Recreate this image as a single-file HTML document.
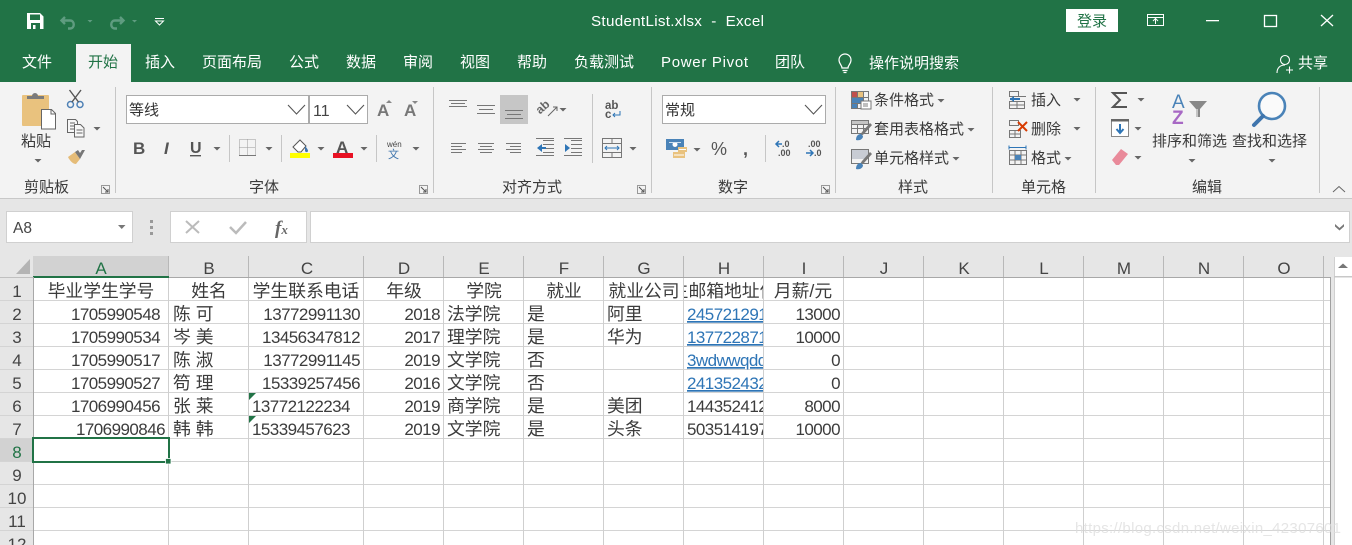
<!DOCTYPE html>
<html lang="zh-CN"><head><meta charset="utf-8"><title>StudentList.xlsx - Excel</title>
<style>
html,body{margin:0;padding:0;width:1352px;height:545px;overflow:hidden;background:#fff}
svg{display:block}
text{font-family:"Liberation Sans","Noto Sans CJK SC",sans-serif;white-space:pre}
.tab{font-size:15px;fill:#fff}
.rb{font-size:15px;fill:#3a3a3a}
.hd{font-size:17px;fill:#444;text-anchor:middle}
.rn{font-size:17px;fill:#444;text-anchor:middle}
.n{font-size:17px;letter-spacing:-.55px;fill:#3c3c3c;text-anchor:end}
.nl{font-size:17px;letter-spacing:-.55px;fill:#3c3c3c}
.c{font-size:17.8px;fill:#3c3c3c;transform:translateY(1px)}
.cc{font-size:17.8px;fill:#3c3c3c;text-anchor:middle;transform:translateY(1px)}
.lk{font-size:17px;letter-spacing:-.55px;fill:#2e75b6;text-decoration:underline}
</style></head><body>
<svg xmlns="http://www.w3.org/2000/svg" width="1352" height="545" viewBox="0 0 1352 545">
<defs>
<symbol id="tri" overflow="visible"><path d="M-3.5 0h7L0 3.5z" fill="#666"/></symbol>
<symbol id="dlg" overflow="visible"><path d="M.5.5h8v8h-8z" fill="none" stroke="#999"/><path d="M2 2l5 5M7 4v3H4" fill="none" stroke="#555"/></symbol>
</defs>
<!-- backgrounds -->
<rect width="1352" height="82" fill="#217346"/>
<rect y="82" width="1352" height="116" fill="#f3f3f3"/>
<rect y="198" width="1352" height="1" fill="#c8c8c8"/>
<rect y="199" width="1352" height="78" fill="#e6e6e6"/>
<rect x="76" y="44" width="55" height="38" fill="#f3f3f3"/>

<!-- QAT -->
<path d="M27 13h13l3.500 3.500V29H27z" fill="#fff"/>
<rect x="30" y="14.500" width="10" height="5.500" fill="#217346"/>
<rect x="31" y="23" width="9" height="6" fill="#217346"/><rect x="33" y="25" width="2.500" height="4" fill="#fff"/>
<path d="M65 17l-3.500 3.500L65 24M62 20.500h8c5 0 5 8 0 8h-2" fill="none" stroke="#5f9c80" stroke-width="2.400"/>
<path d="M87.500 20h5l-2.500 2.500z" fill="#5f9c80"/>
<path d="M120 17l3.500 3.500L120 24M123 20.500h-8c-5 0-5 8 0 8h2" fill="none" stroke="#5f9c80" stroke-width="2.400"/>
<path d="M132 20h5l-2.500 2.500z" fill="#5f9c80"/>
<path d="M155 18.500h9M155.500 21l4 4 4-4z" fill="none" stroke="#fff"/>

<!-- Title -->
<text x="591" y="26" font-size="15.200" letter-spacing=".3" fill="#fff">StudentList.xlsx  -  Excel</text>
<rect x="1066" y="9" width="52" height="23" fill="#fff"/>
<text x="1092" y="26" font-size="15" fill="#217346" text-anchor="middle">登录</text>
<path d="M1147.500 14.500h16v11h-16zM1148 17.500h15" fill="none" stroke="#fff"/><path d="M1155.500 24v-5M1153 21l2.500-2.500 2.500 2.500" fill="none" stroke="#fff"/>
<rect x="1206" y="20" width="13" height="1.300" fill="#fff"/>
<rect x="1264.500" y="15.500" width="12" height="11" fill="none" stroke="#fff" stroke-width="1.300"/>
<path d="M1321 15l12 11M1333 15l-12 11" stroke="#fff" stroke-width="1.300"/>

<!-- Tabs -->
<text class="tab" x="22" y="67">文件</text>
<text class="tab" x="88" y="67" style="fill:#217346">开始</text>
<text class="tab" x="145" y="67">插入</text>
<text class="tab" x="202" y="67">页面布局</text>
<text class="tab" x="289" y="67">公式</text>
<text class="tab" x="346" y="67">数据</text>
<text class="tab" x="403" y="67">审阅</text>
<text class="tab" x="460" y="67">视图</text>
<text class="tab" x="517" y="67">帮助</text>
<text class="tab" x="574" y="67">负载测试</text>
<text class="tab" x="661" y="67" letter-spacing=".7">Power Pivot</text>
<text class="tab" x="775" y="67">团队</text>
<path d="M842 69c0-3-3-4-3-8a6 6 0 0 1 12 0c0 4-3 5-3 8zM842.500 71.500h5M843.500 73.500h3" transform="translate(0 -1)" fill="none" stroke="#fff" stroke-width="1.200"/>
<text class="tab" x="869" y="68">操作说明搜索</text>
<circle cx="1285" cy="60" r="4.500" fill="none" stroke="#fff" stroke-width="1.100"/>
<path d="M1277 73c0-5 3-8 8-8M1286 70h7M1289.500 66.500v7" fill="none" stroke="#fff" stroke-width="1.100"/>
<text class="tab" x="1298" y="68">共享</text>

<!-- ribbon separators -->
<g fill="#c6c6c6">
<rect x="115" y="87" width="1" height="106"/><rect x="433" y="87" width="1" height="106"/>
<rect x="651" y="87" width="1" height="106"/><rect x="835" y="87" width="1" height="106"/>
<rect x="992" y="87" width="1" height="106"/><rect x="1095" y="87" width="1" height="106"/>
<rect x="1319" y="87" width="1" height="106"/>
<rect x="229" y="135" width="1" height="27"/><rect x="281" y="135" width="1" height="27"/><rect x="376" y="135" width="1" height="27"/>
<rect x="592" y="94" width="1" height="69"/><rect x="765" y="135" width="1" height="27"/>
</g>

<!-- Clipboard -->
<rect x="22" y="95" width="27" height="31" rx="1" fill="#e9c27e"/>
<path d="M27 99v-3h5a3 3 0 0 1 6 0h6v3z" fill="#7b7b7b"/>
<path d="M41.500 109.500h10l4 4v15.500h-14z" fill="#fff" stroke="#666"/><path d="M51 110v4h4" fill="none" stroke="#666"/>
<text class="rb" x="21" y="146">粘贴</text>
<use href="#tri" x="38" y="159"/>
<g fill="none"><circle cx="70.500" cy="104.500" r="3" stroke="#4f81b5" stroke-width="1.500"/><circle cx="80" cy="104.500" r="3" stroke="#4f81b5" stroke-width="1.500"/><path d="M72 102l9-12M78.500 102l-9-12" stroke="#555" stroke-width="1.400"/></g>
<path d="M67.500 119.500h8l2 2v3h-3v8h-7zM74.500 124.500h6l3.500 3.500v9h-9.500zM70 123h5M70 126h4M70 129h4M76.500 130h6M76.500 133h6" fill="#f7f7f7" stroke="#666"/>
<use href="#tri" x="97" y="127"/>
<path d="M68 157l7-5 5 7-4 5c-3 0-6-3-8-7z" fill="#e5bc78"/><path d="M75 152l3-2 2 3 2-3 3 0-5 9z" fill="#777"/>

<!-- Font -->
<rect x="126.500" y="95.500" width="182" height="28" fill="#fff" stroke="#ababab"/>
<rect x="309.500" y="95.500" width="58" height="28" fill="#fff" stroke="#ababab"/>
<text x="129" y="115" font-size="15" fill="#333">等线</text>
<text x="313" y="116" font-size="16" fill="#444">11</text>
<path d="M288 105l8.500 9 8.500-9M347 105l8.500 9 8.500-9" fill="none" stroke="#555" stroke-width="1.100"/>
<text x="377" y="116" font-size="17" font-weight="bold" fill="#777">A</text><path d="M386 103h6l-3-3z" fill="#888"/>
<text x="404" y="116" font-size="17" font-weight="bold" fill="#777">A</text><path d="M412 101h6l-3 3z" fill="#888"/>
<text x="133" y="154" font-size="17" font-weight="bold" fill="#555">B</text>
<text x="164" y="154" font-size="17" font-weight="bold" font-style="italic" fill="#555">I</text>
<text x="190" y="153" font-size="16" font-weight="bold" fill="#555">U</text><rect x="190" y="155" width="11" height="1.400" fill="#555"/>
<use href="#tri" x="217" y="147"/>
<path d="M239.500 139.500h16v16h-16zM247.500 139.500v16M239.500 147.500h16" fill="none" stroke="#999" stroke-dasharray="1 1"/><path d="M239 155.500h17" stroke="#777"/>
<use href="#tri" x="269" y="147"/>
<path d="M293 147l7-7 6 6-5 6h-3z" fill="#fff" stroke="#555"/><path d="M305 146c2 2 3 4 3 5s-2 2-3 0z" fill="#3f75ad"/>
<rect x="290" y="153" width="20" height="5" fill="#ffff00"/>
<use href="#tri" x="321" y="147"/>
<text x="336" y="153" font-size="17" fill="#555" font-weight="bold">A</text>
<rect x="333" y="153" width="20" height="5" fill="#e81123"/>
<use href="#tri" x="364" y="147"/>
<text x="387" y="147" font-size="8" fill="#444">wén</text>
<text x="388" y="158" font-size="11" fill="#3f75ad">文</text>
<use href="#tri" x="416" y="147"/>
<text x="24" y="192" class="rb">剪贴板</text>
<text x="249" y="192" class="rb">字体</text>
<use href="#dlg" x="101" y="185"/><use href="#dlg" x="419" y="185"/>

<!-- Alignment -->
<rect x="500" y="95" width="28" height="29" fill="#c6c6c6"/>
<g stroke="#777" stroke-width="1" fill="none">
<path d="M449 100.500h18M451 103.500h14M449 106.500h18"/>
<path d="M477 105.500h18M479 109.500h14M477 113.500h18"/>
<path d="M505 110.500h18M507 114.500h14M505 118.500h18"/>
<path d="M451 143.500h15M451 146.500h11M451 149.500h15M451 152.500h11"/>
<path d="M478 143.500h16M480 146.500h12M478 149.500h16M480 152.500h12"/>
<path d="M506 143.500h15M510 146.500h11M506 149.500h15M510 152.500h11"/>
<path d="M543 140.500h11M543 144.500h11M543 148.500h11M543 152.500h11M536 155.500h18"/>
<path d="M571 140.500h11M571 144.500h11M571 148.500h11M571 152.500h11M564 155.500h18M564 138.500h18"/>
<path d="M536 138.500h18"/>
<path d="M602.500 138.500h19v19h-19zM602.500 143.500h19M602.500 152.500h19M612 138.500v5M612 152.500v5"/>
</g>
<path d="M537 148l5-4v8zM542 147h4v2h-4z" fill="#2e75b6"/><path d="M570 148l-5-4v8z" fill="#2e75b6"/>
<path d="M605 148h14M607 146l-2 2 2 2M617 146l2 2-2 2" fill="none" stroke="#2e75b6"/>
<text x="536" y="110" font-size="12" fill="#666" transform="rotate(-42 544 107)" font-weight="bold">ab</text><path d="M548 116l9-9M553 107h4v4" stroke="#666" fill="none"/>
<use href="#tri" x="563" y="108"/>
<text x="605" y="109" font-size="11.500" fill="#555" font-weight="bold">ab</text>
<text x="605" y="118" font-size="11.500" fill="#555" font-weight="bold">c</text><path d="M620 111v4h-7M615 113l-2 2 2 2" fill="none" stroke="#2e75b6"/>
<use href="#tri" x="633" y="147"/>
<text x="502" y="192" class="rb">对齐方式</text>
<use href="#dlg" x="637" y="185"/>

<!-- Number -->
<rect x="662.500" y="95.500" width="163" height="28" fill="#fff" stroke="#ababab"/>
<text x="665" y="115" font-size="15" fill="#333">常规</text>
<path d="M805 105l8.500 9 8.500-9" fill="none" stroke="#555" stroke-width="1.100"/>
<rect x="666" y="139" width="18" height="11" fill="#4a83b8"/><circle cx="675" cy="144.500" r="2.500" fill="#fff"/><rect x="669" y="142" width="12" height="1" fill="#cfe0f0"/>
<path d="M673 152h12v6h-12z" fill="#e9c27e"/><path d="M678 147h9v5h-9z" fill="#e9c27e"/><path d="M674 155h10M679 149.500h7" stroke="#fff"/>
<use href="#tri" x="697" y="148"/>
<text x="711" y="155" font-size="18" fill="#555">%</text>
<text x="743" y="155" font-size="18" font-weight="bold" fill="#555">,</text>
<text x="782" y="147" font-size="9" fill="#555" font-weight="bold">.0</text><text x="778" y="156" font-size="9" fill="#555" font-weight="bold">.00</text>
<path d="M776 144h6M779 141l-3 3 3 3" stroke="#2e75b6" stroke-width="1.500" fill="none"/>
<text x="808" y="147" font-size="9" fill="#555" font-weight="bold">.00</text><text x="814" y="156" font-size="9" fill="#555" font-weight="bold">.0</text>
<path d="M806 153h7M810 150l3 3-3 3" stroke="#2e75b6" stroke-width="1.500" fill="none"/>
<text x="718" y="192" class="rb">数字</text>
<use href="#dlg" x="821" y="185"/>

<!-- Styles -->
<g fill="none" stroke="#777">
<path d="M851.500 91.500h17v17h-17zM851.500 97.500h17M851.500 103.500h17M857.500 91.500v17M863.500 91.500v17"/>
<path d="M851.500 120.500h17v13h-17zM851.500 124.500h17M851.500 128.500h17M857.500 120.500v13M863.500 120.500v13"/>
<path d="M851.500 149.500h17v14h-17z"/>
</g>
<rect x="852" y="92" width="5" height="5" fill="#c0504d"/><rect x="852" y="98" width="11" height="5" fill="#4a83b8"/><rect x="852" y="104" width="5" height="4" fill="#4a83b8"/><rect x="858" y="92" width="5" height="5" fill="#e9c27e"/>
<rect x="861" y="101" width="10" height="8" fill="#fff" stroke="#777"/><path d="M863 104h5M863 106h5" stroke="#555" stroke-width=".7"/>
<rect x="852" y="121" width="16" height="3" fill="#c5c5c5"/>
<path d="M858 138l4-6 8-9 2 2-8 9z" fill="#777"/><path d="M856 140c0-4 2-6 5-6l2 2c0 3-3 5-7 4z" fill="#4a83b8"/>
<rect x="852" y="150" width="16" height="9" fill="#c8ccd4"/>
<path d="M858 167l4-6 8-9 2 2-8 9z" fill="#777"/><path d="M856 169c0-4 2-6 5-6l2 2c0 3-3 5-7 4z" fill="#4a83b8"/>
<text class="rb" x="874" y="105">条件格式</text><use href="#tri" x="941" y="99"/>
<text class="rb" x="874" y="134">套用表格格式</text><use href="#tri" x="971" y="128"/>
<text class="rb" x="874" y="163">单元格样式</text><use href="#tri" x="956" y="157"/>
<text class="rb" x="898" y="192">样式</text>

<!-- Cells -->
<g fill="none" stroke="#777">
<path d="M1009.500 91.500h9v5h-9zM1009.500 101.500h15v7h-15zM1017 101.500v7M1009.500 105h15M1019 96.500h7"/>
<path d="M1009.500 120.500h9v5h-9zM1009.500 130.500h11v7h-11zM1015 130.500v7M1009.500 134h11"/>
<path d="M1009.500 150.500h17v14h-17zM1015 150.500v14M1021 150.500v14M1009.500 155h17M1009.500 160h17"/>
</g>
<path d="M1010 98h10v2h-10zM1010 99l4-3v6z" fill="#2e75b6"/>
<path d="M1018 122l9 9M1027 122l-9 9" stroke="#d83b01" stroke-width="2"/>
<path d="M1009 147.500h17M1009 145.500v4M1026 145.500v4" stroke="#2e75b6" fill="none"/>
<rect x="1015" y="155" width="6" height="5" fill="#4a83b8"/>
<text class="rb" x="1031" y="105">插入</text><use href="#tri" x="1077" y="98"/>
<text class="rb" x="1031" y="134">删除</text><use href="#tri" x="1077" y="127"/>
<text class="rb" x="1031" y="163">格式</text><use href="#tri" x="1068" y="157"/>
<text class="rb" x="1021" y="192">单元格</text>

<!-- Editing -->
<path d="M1127 93h-14l7 7-7 7h14" fill="none" stroke="#555" stroke-width="2"/>
<use href="#tri" x="1141" y="98"/>
<rect x="1111.500" y="119.500" width="17" height="17" fill="#fff" stroke="#888"/><rect x="1111" y="119" width="18" height="2.500" fill="#666"/>
<path d="M1120 124v8M1116.500 129l3.500 4 3.500-4" fill="none" stroke="#2e75b6" stroke-width="2"/>
<use href="#tri" x="1138" y="127"/>
<path d="M1112 160l9-11 7 5-9 11h-3z" fill="#e98a9a"/>
<use href="#tri" x="1138" y="156"/>
<text x="1172" y="108" font-size="19" fill="#4a83b8">A</text>
<text x="1172" y="124" font-size="19" fill="#a768c4" font-weight="bold">Z</text>
<path d="M1189 101h18l-7 8v8h-4v-8z" fill="#888"/><path d="M1196.500 109h1v8h-1z" fill="#fff"/>
<text class="rb" x="1152" y="146">排序和筛选</text><use href="#tri" x="1192" y="159"/>
<circle cx="1272" cy="106" r="13" fill="#fff" fill-opacity=".6" stroke="#4a83b8" stroke-width="2.600"/>
<path d="M1263 116l-9 9" stroke="#3f75ad" stroke-width="4" stroke-linecap="round"/>
<text class="rb" x="1232" y="146">查找和选择</text><use href="#tri" x="1272" y="159"/>
<text class="rb" x="1192" y="192">编辑</text>
<path d="M1333 192l6-5.500 6 5.500" fill="none" stroke="#666"/>

<!-- Formula bar -->
<rect x="6.500" y="211.500" width="126" height="31" fill="#fff" stroke="#d0d0d0"/>
<text x="13" y="233" font-size="15.500" fill="#444">A8</text>
<path d="M118 225h7.500l-3.750 4z" fill="#777"/>
<g fill="#999"><rect x="150" y="220" width="3" height="3"/><rect x="150" y="226" width="3" height="3"/><rect x="150" y="232" width="3" height="3"/></g>
<rect x="170.500" y="211.500" width="136" height="31" fill="#fff" stroke="#d0d0d0"/>
<path d="M186 221l13 12M199 221l-13 12" stroke="#bbb" stroke-width="2"/>
<path d="M230 227l6 6 10-11" fill="none" stroke="#bbb" stroke-width="2.500"/>
<text x="275" y="234" font-size="19" font-style="italic" font-weight="bold" fill="#666" style="font-family:'Liberation Serif',serif">f<tspan font-size="13">x</tspan></text>
<rect x="310.500" y="211.500" width="1039" height="31" fill="#fff" stroke="#d0d0d0"/>
<path d="M1335 224l4.500 4 4.500-4v2.500l-4.500 4-4.500-4z" fill="#777"/>

<!-- Grid sheet -->
<rect x="33" y="277" width="1298" height="268" fill="#fff"/>
<rect x="0" y="277" width="33" height="268" fill="#e6e6e6"/>
<rect x="33" y="256" width="136" height="21" fill="#d2d2d2"/>
<rect x="0" y="439" width="33" height="23" fill="#d2d2d2"/>
<path d="M30 259v15H16z" fill="#b4b4b4"/>
<g fill="#d4d4d4">
<rect x="0" y="300" width="1330" height="1"/><rect x="0" y="323" width="1330" height="1"/><rect x="0" y="346" width="1330" height="1"/>
<rect x="0" y="369" width="1330" height="1"/><rect x="0" y="392" width="1330" height="1"/><rect x="0" y="415" width="1330" height="1"/>
<rect x="0" y="438" width="1330" height="1"/><rect x="0" y="461" width="1330" height="1"/><rect x="0" y="484" width="1330" height="1"/>
<rect x="0" y="507" width="1330" height="1"/><rect x="0" y="530" width="1330" height="1"/>
</g>
<g fill="#cfcfcf">
<rect x="168" y="256" width="1" height="289"/><rect x="248" y="256" width="1" height="289"/><rect x="363" y="256" width="1" height="289"/>
<rect x="443" y="256" width="1" height="289"/><rect x="523" y="256" width="1" height="289"/><rect x="603" y="256" width="1" height="289"/>
<rect x="683" y="256" width="1" height="289"/><rect x="763" y="256" width="1" height="289"/><rect x="843" y="256" width="1" height="289"/>
<rect x="923" y="256" width="1" height="289"/><rect x="1003" y="256" width="1" height="289"/><rect x="1083" y="256" width="1" height="289"/>
<rect x="1163" y="256" width="1" height="289"/><rect x="1243" y="256" width="1" height="289"/><rect x="1323" y="256" width="1" height="289"/>
</g>
<g fill="#b8b8b8">
<rect x="168" y="256" width="1" height="21"/><rect x="248" y="256" width="1" height="21"/><rect x="363" y="256" width="1" height="21"/>
<rect x="443" y="256" width="1" height="21"/><rect x="523" y="256" width="1" height="21"/><rect x="603" y="256" width="1" height="21"/>
<rect x="683" y="256" width="1" height="21"/><rect x="763" y="256" width="1" height="21"/><rect x="843" y="256" width="1" height="21"/>
<rect x="923" y="256" width="1" height="21"/><rect x="1003" y="256" width="1" height="21"/><rect x="1083" y="256" width="1" height="21"/>
<rect x="1163" y="256" width="1" height="21"/><rect x="1243" y="256" width="1" height="21"/><rect x="1323" y="256" width="1" height="21"/>
</g>
<rect x="33" y="277" width="1298" height="1" fill="#a8a8a8"/>
<rect x="0" y="277" width="33" height="1" fill="#c0c0c0"/>
<rect x="33" y="276" width="136" height="2" fill="#217346"/>
<rect x="33" y="277" width="1" height="268" fill="#a8a8a8"/>
<rect x="1330" y="277" width="1" height="268" fill="#a0a0a0"/>
<rect x="1331" y="256" width="3" height="289" fill="#e6e6e6"/>
<rect x="1334" y="257" width="18" height="288" fill="#fff"/>
<rect x="1334" y="257" width="1" height="288" fill="#d0d0d0"/>
<rect x="1334" y="276" width="18" height="1.500" fill="#c8c8c8"/>
<path d="M1338 268l5-4.500 5 4.500z" fill="#777"/>

<!-- column heads -->
<text class="hd" x="101" y="274" style="fill:#217346">A</text>
<text class="hd" x="209" y="274">B</text><text class="hd" x="307" y="274">C</text><text class="hd" x="404" y="274">D</text>
<text class="hd" x="484" y="274">E</text><text class="hd" x="564" y="274">F</text><text class="hd" x="644" y="274">G</text>
<text class="hd" x="724" y="274">H</text><text class="hd" x="804" y="274">I</text><text class="hd" x="884" y="274">J</text>
<text class="hd" x="964" y="274">K</text><text class="hd" x="1044" y="274">L</text><text class="hd" x="1124" y="274">M</text>
<text class="hd" x="1204" y="274">N</text><text class="hd" x="1284" y="274">O</text>
<!-- row heads -->
<text class="rn" x="17" y="297">1</text><text class="rn" x="17" y="320">2</text><text class="rn" x="17" y="343">3</text>
<text class="rn" x="17" y="366">4</text><text class="rn" x="17" y="389">5</text><text class="rn" x="17" y="412">6</text>
<text class="rn" x="17" y="435">7</text><text class="rn" x="17" y="458" style="fill:#217346">8</text><text class="rn" x="17" y="481">9</text>
<text class="rn" x="17" y="504">10</text><text class="rn" x="17" y="527">11</text>
<svg x="0" y="531" width="33" height="14"><text class="rn" x="17" y="19">12</text></svg>

<!-- row 1 -->
<text class="cc" x="101" y="296">毕业学生学号</text>
<text class="cc" x="209" y="296">姓名</text>
<text class="cc" x="306" y="296">学生联系电话</text>
<text class="cc" x="404" y="296">年级</text>
<text class="cc" x="484" y="296">学院</text>
<text class="cc" x="564" y="296">就业</text>
<text class="cc" x="644" y="296">就业公司</text>
<svg x="684" y="278" width="79" height="22"><text class="cc" x="40" y="18">生邮箱地址信</text></svg>
<text class="cc" x="803" y="296">月薪/元</text>

<!-- col A -->
<text class="n" x="160" y="320">1705990548</text><text class="n" x="160" y="343">1705990534</text><text class="n" x="160" y="366">1705990517</text>
<text class="n" x="160" y="389">1705990527</text><text class="n" x="160" y="412">1706990456</text><text class="n" x="165" y="435">1706990846</text>
<!-- col B -->
<text class="c" x="173" y="319">陈 可</text><text class="c" x="173" y="342">岑 美</text><text class="c" x="173" y="365">陈 淑</text>
<text class="c" x="173" y="388">笱 理</text><text class="c" x="173" y="411">张 莱</text><text class="c" x="173" y="434">韩 韩</text>
<!-- col C -->
<text class="n" x="360" y="320">13772991130</text><text class="n" x="360" y="343">13456347812</text><text class="n" x="360" y="366">13772991145</text>
<text class="n" x="360" y="389">15339257456</text><text class="nl" x="252" y="412">13772122234</text><text class="nl" x="252" y="435">15339457623</text>
<path d="M249 393h7l-7 7zM249 416h7l-7 7z" fill="#217346"/>
<!-- col D -->
<text class="n" x="440" y="320">2018</text><text class="n" x="440" y="343">2017</text><text class="n" x="440" y="366">2019</text>
<text class="n" x="440" y="389">2016</text><text class="n" x="440" y="412">2019</text><text class="n" x="440" y="435">2019</text>
<!-- col E -->
<text class="c" x="447" y="319">法学院</text><text class="c" x="447" y="342">理学院</text><text class="c" x="447" y="365">文学院</text>
<text class="c" x="447" y="388">文学院</text><text class="c" x="447" y="411">商学院</text><text class="c" x="447" y="434">文学院</text>
<!-- col F -->
<text class="c" x="527" y="319">是</text><text class="c" x="527" y="342">是</text><text class="c" x="527" y="365">否</text>
<text class="c" x="527" y="388">否</text><text class="c" x="527" y="411">是</text><text class="c" x="527" y="434">是</text>
<!-- col G -->
<text class="c" x="607" y="319">阿里</text><text class="c" x="607" y="342">华为</text><text class="c" x="607" y="411">美团</text><text class="c" x="607" y="434">头条</text>
<!-- col H -->
<svg x="684" y="301" width="79" height="138">
<text class="lk" x="3" y="19">2457212912</text>
<text class="lk" x="3" y="42">1377228712</text>
<text class="lk" x="3" y="65">3wdwwqdqq</text>
<text class="lk" x="3" y="88">2413524321</text>
<text class="nl" x="3" y="111">1443524123</text>
<text class="nl" x="3" y="134">5035141973</text>
</svg>
<!-- col I -->
<text class="n" x="840" y="320">13000</text><text class="n" x="840" y="343">10000</text><text class="n" x="840" y="366">0</text>
<text class="n" x="840" y="389">0</text><text class="n" x="840" y="412">8000</text><text class="n" x="840" y="435">10000</text>

<!-- selection -->
<rect x="33" y="438" width="136" height="24" fill="none" stroke="#217346" stroke-width="2"/>
<rect x="165.500" y="458.500" width="5.500" height="5.500" fill="#217346" stroke="#fff" stroke-width=".8"/>

<!-- watermark -->
<text x="1075" y="533" font-size="15" fill="#dcdcdc" fill-opacity=".75" letter-spacing=".3">https://blog.csdn.net/weixin_42307601</text>
</svg>
</body></html>
